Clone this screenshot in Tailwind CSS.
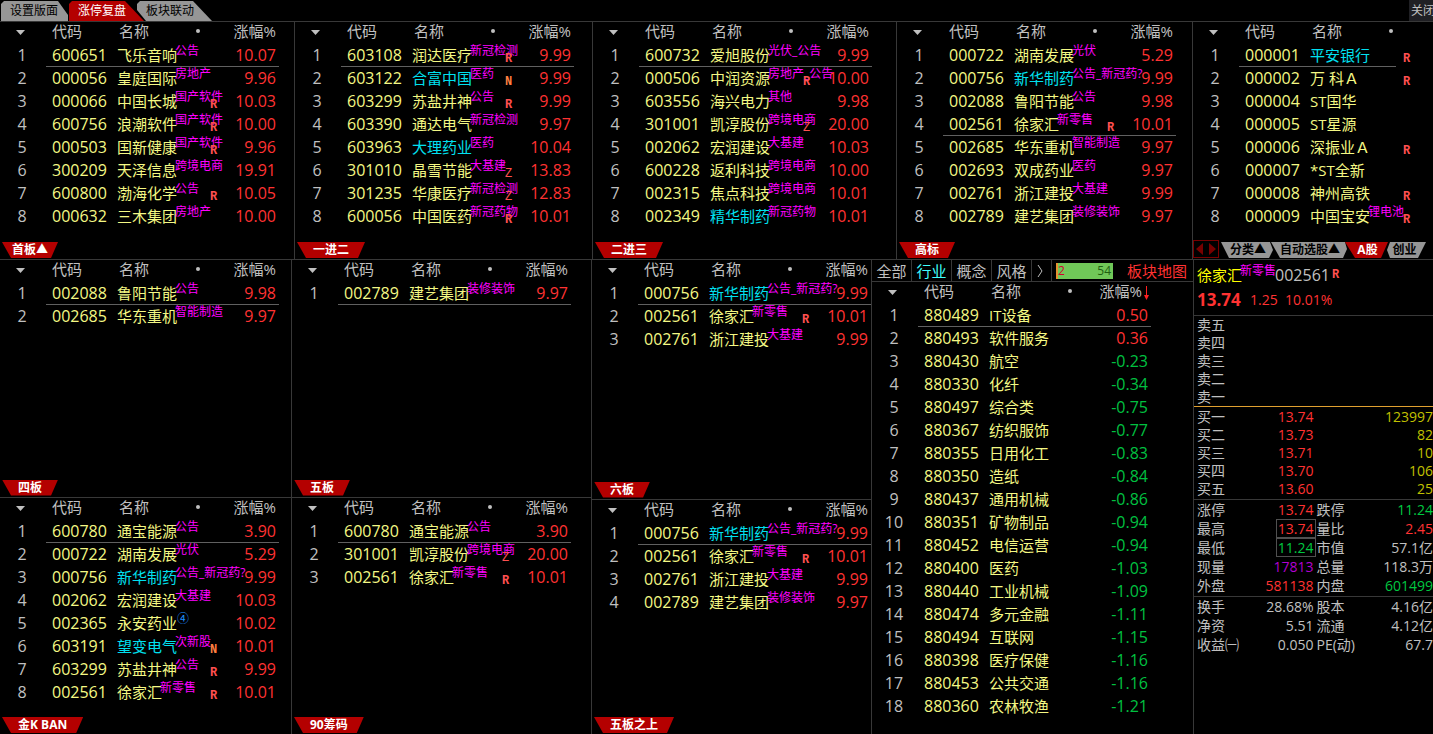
<!DOCTYPE html>
<html lang="zh-CN">
<head>
  <meta charset="UTF-8">
  <meta name="viewport" content="width=device-width, initial-scale=1.0">
  <title>涨停复盘</title>
  <script src="https://cdn.jsdelivr.net/npm/@tailwindcss/browser@4"></script>
</head>
<body class="flex min-h-screen flex-col overflow-x-hidden bg-black font-['Open_Sans','Noto_Sans_CJK_SC',sans-serif] text-[15px] text-[#c0c0c0]">
  <!-- Top tabs -->
  <header class="flex items-start border-b border-[#383838] pl-px text-xs leading-5">
    <nav class="flex pt-px text-black">
      <button class="h-5 w-[67px] bg-[#969696] pr-px text-center [clip-path:polygon(0_3px,3px_0,57px_0,67px_14px,67px_100%,0_100%)]">设置版面</button>
      <button class="ml-px h-5 w-[75px] bg-[#b40000] pr-[9px] text-center text-white [clip-path:polygon(0_3px,3px_0,56px_0,100%_100%,0_100%)]">涨停复盘</button>
      <button class="-ml-[7px] h-5 w-[75px] bg-[#969696] pr-[9px] text-center [clip-path:polygon(0_3px,3px_0,56px_0,100%_100%,9px_100%,0_9px)]">板块联动</button>
    </nav>
    <button class="ml-auto h-[21px] w-6 overflow-hidden bg-[#202024] pl-0.5 text-left whitespace-nowrap">关闭</button>
  </header>

  <!-- First row of lists -->
  <main class="flex flex-1 flex-col">
    <div class="grid grid-cols-[295fr_298fr_304fr_296fr_240fr] border-b border-[#383838]">
      <section class="flex min-w-0 flex-col overflow-hidden border-r border-[#383838]">
        <table data-list="first"></table>
        <div data-tab="首板▲" class="mt-auto pt-[14px] pb-px pl-0.5"></div>
      </section>
      <section class="flex min-w-0 flex-col overflow-hidden border-r border-[#383838]">
        <table data-list="second"></table>
        <div data-tab="一进二" class="mt-auto pt-[14px] pb-px pl-0.5"></div>
      </section>
      <section class="flex min-w-0 flex-col overflow-hidden border-r border-[#383838]">
        <table data-list="third"></table>
        <div data-tab="二进三" class="mt-auto pt-[14px] pb-px pl-0.5"></div>
      </section>
      <section class="flex min-w-0 flex-col overflow-hidden border-r border-[#383838]">
        <table data-list="high"></table>
        <div data-tab="高标" class="mt-auto pt-[14px] pb-px pl-0.5"></div>
      </section>
      <section class="flex min-w-0 flex-col overflow-hidden">
        <table data-list="ashare"></table>
        <div class="mt-auto flex items-end pb-px text-xs leading-4 font-bold text-black">
          <button aria-label="滚动" class="mr-0.5 flex h-[18px] w-[26px] shrink-0 items-center justify-center border border-[#780000]">
            <svg width="20" height="12" viewBox="0 0 20 12" fill="#780000"><path d="M7 0v12L0 6zM13 0v12l7-6z"/></svg>
          </button>
          <button class="h-4 w-[52px] shrink-0 bg-[#969696] pl-0.5 whitespace-nowrap [clip-path:polygon(0_0,49px_0,100%_8px,48px_100%,8px_100%)]">分类▲</button>
          <button class="-ml-0.5 h-4 w-[76px] shrink-0 bg-[#969696] pl-0.5 whitespace-nowrap [clip-path:polygon(0_0,74px_0,100%_7px,72px_100%,9px_100%)]">自动选股▲</button>
          <button class="-ml-0.5 h-4 w-[43px] shrink-0 bg-[#b40000] pl-0.5 text-white [clip-path:polygon(0_0,100%_0,36px_100%,10px_100%)]">A股</button>
          <button class="-ml-px h-4 w-[39px] shrink-0 bg-[#969696] pr-1 [clip-path:polygon(3px_0,100%_0,31px_100%,3px_100%,0_8px)]">创业</button>
        </div>
      </section>
    </div>

    <!-- Lower lists, sector list and quote -->
    <div class="grid flex-1 grid-cols-[292fr_300fr_280fr_322fr_239fr]">
      <div class="flex min-w-0 flex-col border-r border-[#383838]">
        <section class="flex flex-1 flex-col overflow-hidden border-b border-[#383838]">
          <table data-list="four"></table>
          <div data-tab="四板" class="mt-auto pb-px pl-0.5"></div>
        </section>
        <section class="flex flex-1 flex-col overflow-hidden">
          <table data-list="gold"></table>
          <div data-tab="金K BAN" class="mt-auto pb-px pl-0.5"></div>
        </section>
      </div>
      <div class="flex min-w-0 flex-col border-r border-[#383838]">
        <section class="flex flex-1 flex-col overflow-hidden border-b border-[#383838]">
          <table data-list="five"></table>
          <div data-tab="五板" class="mt-auto pb-px pl-0.5"></div>
        </section>
        <section class="flex flex-1 flex-col overflow-hidden">
          <table data-list="chips"></table>
          <div data-tab="90筹码" class="mt-auto pb-px pl-0.5"></div>
        </section>
      </div>
      <div class="flex min-w-0 flex-col border-r border-[#383838]">
        <section class="flex flex-[239] flex-col overflow-hidden border-b border-[#383838]">
          <table data-list="six"></table>
          <div data-tab="六板" class="mt-auto pb-px pl-0.5"></div>
        </section>
        <section class="flex flex-[235] flex-col overflow-hidden">
          <table data-list="above"></table>
          <div data-tab="五板之上" class="mt-auto pb-px pl-0.5"></div>
        </section>
      </div>

      <section class="min-w-0 overflow-hidden border-r border-[#383838]">
        <div class="flex h-[22px] items-center border-b border-[#383838] leading-5 whitespace-nowrap">
          <button class="h-full w-10 border-r border-[#383838]">全部</button>
          <button class="h-full w-10 border-r border-[#383838] text-[#40ffff]">行业</button>
          <button class="h-full w-10 border-r border-[#383838]">概念</button>
          <button class="h-full w-10 border-r border-[#383838]">风格</button>
          <button aria-label="更多" class="flex h-full w-5 items-center justify-center border-r border-[#383838] pr-1">
            <svg width="6" height="14" viewBox="0 0 6 14" fill="none" stroke="#c0c0c0"><path d="M1 1l4 6-4 6"/></svg>
          </button>
          <div class="ml-1 flex h-4 w-[57px] justify-between border-l-2 border-[#e89030] bg-[#70c858] pr-0.5 text-xs leading-4 text-[#206010]"><span class="text-[#d00030]">2</span><span>54</span></div>
          <a href="#" class="ml-auto pr-1.5 text-[#ff3232]">板块地图</a>
        </div>
        <table data-list="sectors"></table>
      </section>

      <!-- Quote of the selected stock -->
      <aside class="min-w-0 overflow-hidden text-sm leading-[18px]">
        <div class="border-b border-[#383838] pt-1 pb-1 pl-[3px] whitespace-nowrap">
          <div class="flex h-[22px] items-center">
            <h1 class="text-[15px] leading-[22px] text-[#ffff00]">徐家汇</h1>
            <span class="-ml-0.5 self-start text-xs leading-[14px] text-[#ff00ff]">新零售</span>
            <span class="-ml-px text-base leading-[22px]">002561</span>
            <span class="ml-0.5 font-['Liberation_Mono',monospace] text-xs font-bold text-[#ff5050]">R</span>
          </div>
          <div class="flex h-[25px] items-center pt-0.5 text-[#ff3232]">
            <strong class="w-[53px] text-[17px]">13.74</strong>
            <span class="w-[35px]">1.25</span>
            <span>10.01%</span>
          </div>
        </div>
        <dl id="sell" class="border-b border-[#e0a030]"></dl>
        <dl id="buy" class="border-b border-[#383838] pt-px pb-px"></dl>
        <dl id="stats" class="grid grid-cols-2 border-b border-[#383838] pb-px leading-[19px]"></dl>
        <dl id="finance" class="grid grid-cols-2 leading-[19px]"></dl>
      </aside>
    </div>
  </main>

  <script>
    // Each row: code, name, tag, mark, change. A name that starts with "!" is drawn in cyan.
    const lists = {
      first: { selected: 1, rows: [
        ['600651', '飞乐音响', '公告', '', '10.07'],
        ['000056', '皇庭国际', '房地产', '', '9.96'],
        ['000066', '中国长城', '国产软件', 'R', '10.03'],
        ['600756', '浪潮软件', '国产软件', 'R', '10.00'],
        ['000503', '国新健康', '国产软件', 'R', '9.96'],
        ['300209', '天泽信息', '跨境电商', '', '19.91'],
        ['600800', '渤海化学', '公告', 'R', '10.05'],
        ['000632', '三木集团', '房地产', '', '10.00']
      ] },
      second: { selected: 1, rows: [
        ['603108', '润达医疗', '新冠检测', 'R', '9.99'],
        ['603122', '!合富中国', '医药', 'N', '9.99'],
        ['603299', '苏盐井神', '公告', 'R', '9.99'],
        ['603390', '通达电气', '新冠检测', '', '9.97'],
        ['603963', '!大理药业', '医药', '', '10.04'],
        ['301010', '晶雪节能', '大基建', 'Z', '13.83'],
        ['301235', '华康医疗', '新冠检测', 'Z', '12.83'],
        ['600056', '中国医药', '新冠药物', 'R', '10.01']
      ] },
      third: { selected: 1, rows: [
        ['600732', '爱旭股份', '光伏_公告', '', '9.99'],
        ['000506', '中润资源', '房地产_公告', 'R', '10.00'],
        ['603556', '海兴电力', '其他', '', '9.98'],
        ['301001', '凯淳股份', '跨境电商', 'Z', '20.00'],
        ['002062', '宏润建设', '大基建', '', '10.03'],
        ['600228', '返利科技', '跨境电商', '', '10.00'],
        ['002315', '焦点科技', '跨境电商', '', '10.01'],
        ['002349', '!精华制药', '新冠药物', '', '10.01']
      ] },
      high: { selected: 4, rows: [
        ['000722', '湖南发展', '光伏', '', '5.29'],
        ['000756', '!新华制药', '公告_新冠药?', '', '9.99'],
        ['002088', '鲁阳节能', '公告', '', '9.98'],
        ['002561', '徐家汇', '新零售', 'R', '10.01'],
        ['002685', '华东重机', '智能制造', '', '9.97'],
        ['002693', '双成药业', '医药', '', '9.97'],
        ['002761', '浙江建投', '大基建', '', '9.99'],
        ['002789', '建艺集团', '装修装饰', '', '9.97']
      ] },
      ashare: { selected: 1, noChange: true, rows: [
        ['000001', '!平安银行', '', 'R'],
        ['000002', '万 科Ａ', '', 'R'],
        ['000004', 'ST国华', '', ''],
        ['000005', 'ST星源', '', ''],
        ['000006', '深振业Ａ', '', 'R'],
        ['000007', '*ST全新', '', ''],
        ['000008', '神州高铁', '', 'R'],
        ['000009', '中国宝安', '锂电池', 'R']
      ] },
      four: { selected: 1, rows: [
        ['002088', '鲁阳节能', '公告', '', '9.98'],
        ['002685', '华东重机', '智能制造', '', '9.97']
      ] },
      five: { selected: 1, rows: [
        ['002789', '建艺集团', '装修装饰', '', '9.97']
      ] },
      six: { selected: 1, rows: [
        ['000756', '!新华制药', '公告_新冠药?', '', '9.99'],
        ['002561', '徐家汇', '新零售', 'R', '10.01'],
        ['002761', '浙江建投', '大基建', '', '9.99']
      ] },
      gold: { selected: 1, rows: [
        ['600780', '通宝能源', '公告', '', '3.90'],
        ['000722', '湖南发展', '光伏', '', '5.29'],
        ['000756', '!新华制药', '公告_新冠药?', '', '9.99'],
        ['002062', '宏润建设', '大基建', '', '10.03'],
        ['002365', '永安药业', '④', '', '10.02'],
        ['603191', '!望变电气', '次新股', 'N', '10.01'],
        ['603299', '苏盐井神', '公告', 'R', '9.99'],
        ['002561', '徐家汇', '新零售', 'R', '10.01']
      ] },
      chips: { selected: 1, rows: [
        ['600780', '通宝能源', '公告', '', '3.90'],
        ['301001', '凯淳股份', '跨境电商', 'Z', '20.00'],
        ['002561', '徐家汇', '新零售', 'R', '10.01']
      ] },
      above: { selected: 1, rows: [
        ['000756', '!新华制药', '公告_新冠药?', '', '9.99'],
        ['002561', '徐家汇', '新零售', 'R', '10.01'],
        ['002761', '浙江建投', '大基建', '', '9.99'],
        ['002789', '建艺集团', '装修装饰', '', '9.97']
      ] },
      sectors: { selected: 1, sorted: true, rows: [
        ['880489', 'IT设备', '', '', '0.50'],
        ['880493', '软件服务', '', '', '0.36'],
        ['880430', '航空', '', '', '-0.23'],
        ['880330', '化纤', '', '', '-0.34'],
        ['880497', '综合类', '', '', '-0.75'],
        ['880367', '纺织服饰', '', '', '-0.77'],
        ['880355', '日用化工', '', '', '-0.83'],
        ['880350', '造纸', '', '', '-0.84'],
        ['880437', '通用机械', '', '', '-0.86'],
        ['880351', '矿物制品', '', '', '-0.94'],
        ['880452', '电信运营', '', '', '-0.94'],
        ['880400', '医药', '', '', '-1.03'],
        ['880440', '工业机械', '', '', '-1.09'],
        ['880474', '多元金融', '', '', '-1.11'],
        ['880494', '互联网', '', '', '-1.15'],
        ['880398', '医疗保健', '', '', '-1.16'],
        ['880453', '公共交通', '', '', '-1.16'],
        ['880360', '农林牧渔', '', '', '-1.21']
      ] }
    };

    const markColors = { R: 'font-bold text-[#ff5050]', N: 'font-bold text-[#ff8040]', Z: 'text-[#ff5050]' };

    function renderRow(row, i, list) {
      const [code, name, tag, mark, change] = row;
      const line = list.selected === i + 1 ? 'border-[#606060]' : 'border-transparent';
      const changeLine = list.noChange ? 'border-transparent' : line;
      const nameColor = name[0] === '!' ? 'text-[#00e0f0]' : 'text-[#f4f884]';
      const tagColor = tag === '④' ? 'pl-0.5 text-[#1e90ff]' : 'text-[#ff00ff]';
      const changeColor = change && change[0] === '-' ? 'text-[#00c040]' : 'text-[#ff3232]';
      return `
        <tr class="h-[23px]">
          <td class="border-b border-transparent pr-0.5 text-center text-base leading-[22px]">${i + 1}</td>
          <td class="border-b pl-1.5 text-base leading-[22px] text-[#f4f884] ${line}">${code}</td>
          <td class="border-b pl-1.5 leading-[22px] whitespace-nowrap ${line}">
            <span class="relative inline-block align-top ${nameColor}">${name.replace('!', '')}<span class="absolute top-0 left-full -ml-0.5 text-xs leading-[14px] ${tagColor}">${tag}</span></span>
          </td>
          <td class="border-b pl-[7px] align-bottom font-['Liberation_Mono',monospace] text-xs leading-[14px] ${changeLine}"><span class="relative ${markColors[mark] || ''}">${mark}</span></td>
          <td class="border-b pr-[3px] text-right text-base leading-[22px] ${changeColor} ${changeLine}">${change || ''}</td>
        </tr>`;
    }

    document.querySelectorAll('[data-list]').forEach(table => {
      const list = lists[table.dataset.list];
      table.className = 'w-[279px] table-fixed border-separate border-spacing-0';
      table.innerHTML = `
        <colgroup><col class="w-[46px]"><col class="w-[65px]"><col class="w-[92px]"><col class="w-[19px]"><col class="w-[57px]"></colgroup>
        <thead>
          <tr class="h-[22px] align-top leading-[18px] whitespace-nowrap">
            <th class="pt-2 pr-1.5"><svg class="mx-auto" width="9" height="5" viewBox="0 0 9 5" fill="#c0c0c0"><path d="M0 0h9L4.500 5z"/></svg></th>
            <th class="pl-1.5 text-left font-normal">代码</th>
            <th class="pr-[3px] pl-2 font-normal"><span class="flex items-center justify-between">名称<span class="size-1 rounded-full bg-[#c0c0c0]"></span></span></th>
            <th></th>
            <th class="relative font-normal ${list.sorted ? 'pr-[9px]' : 'pr-[3px]'}"><span class="flex justify-end">${list.noChange ? '' : '涨幅%'}</span>${list.sorted ? '<svg class="absolute top-1 right-0.5" width="5" height="14" viewBox="0 0 5 14" fill="#ff2020"><path d="M2 0h1v9h2L2.500 14 0 9h2z"/></svg>' : ''}</th>
          </tr>
        </thead>
        <tbody>${list.rows.map((row, i) => renderRow(row, i, list)).join('')}</tbody>`;
    });

    document.querySelectorAll('[data-tab]').forEach(box => {
      const pad = box.dataset.tab.endsWith('▲') ? 'px-2.5' : 'px-4';
      box.innerHTML = `<button class="block h-4 bg-[#b40000] ${pad} text-xs leading-4 font-bold text-white [clip-path:polygon(0_0,100%_0,calc(100%_-_7px)_100%,9px_100%)]">${box.dataset.tab}</button>`;
    });

    // Order book
    const buy = [['买一', '13.74', '123997'], ['买二', '13.73', '82'], ['买三', '13.71', '10'], ['买四', '13.70', '106'], ['买五', '13.60', '25']];
    document.getElementById('sell').innerHTML = ['卖五', '卖四', '卖三', '卖二', '卖一'].map(label => `<div class="h-[18px] pl-[3px]"><dt>${label}</dt></div>`).join('');
    document.getElementById('buy').innerHTML = buy.map(([label, price, volume]) => `
      <div class="grid h-[18px] grid-cols-2">
        <div class="flex justify-between pl-[3px]"><dt>${label}</dt><dd class="text-[#ff3232]">${price}</dd></div>
        <dd class="text-right text-[#c0c000]">${volume}</dd>
      </div>`).join('');

    const red = 'text-[#ff3232]';
    const green = 'text-[#00c840]';
    const stats = [
      ['涨停', '13.74', red], ['跌停', '11.24', green],
      ['最高', '13.74', red, true], ['量比', '2.45', red],
      ['最低', '11.24', green, true], ['市值', '57.1亿', ''],
      ['现量', '17813', 'text-[#b000d0]'], ['总量', '118.3万', ''],
      ['外盘', '581138', red], ['内盘', '601499', green]
    ];
    const finance = [
      ['换手', '28.68%', ''], ['股本', '4.16亿', ''],
      ['净资', '5.51', ''], ['流通', '4.12亿', ''],
      ['收益㈠', '0.050', ''], ['PE(动)', '67.7', '']
    ];
    const renderStat = ([label, value, color, boxed]) => `
      <div class="flex h-[19px] justify-between pl-[3px] whitespace-nowrap"><dt>${label}</dt><dd class="${color} ${boxed ? '-mr-0.5 border border-[#505050] pr-px pl-px leading-[17px]' : ''}">${value}</dd></div>`;
    document.getElementById('stats').innerHTML = stats.map(renderStat).join('');
    document.getElementById('finance').innerHTML = finance.map(renderStat).join('');
  </script>
</body>
</html>
